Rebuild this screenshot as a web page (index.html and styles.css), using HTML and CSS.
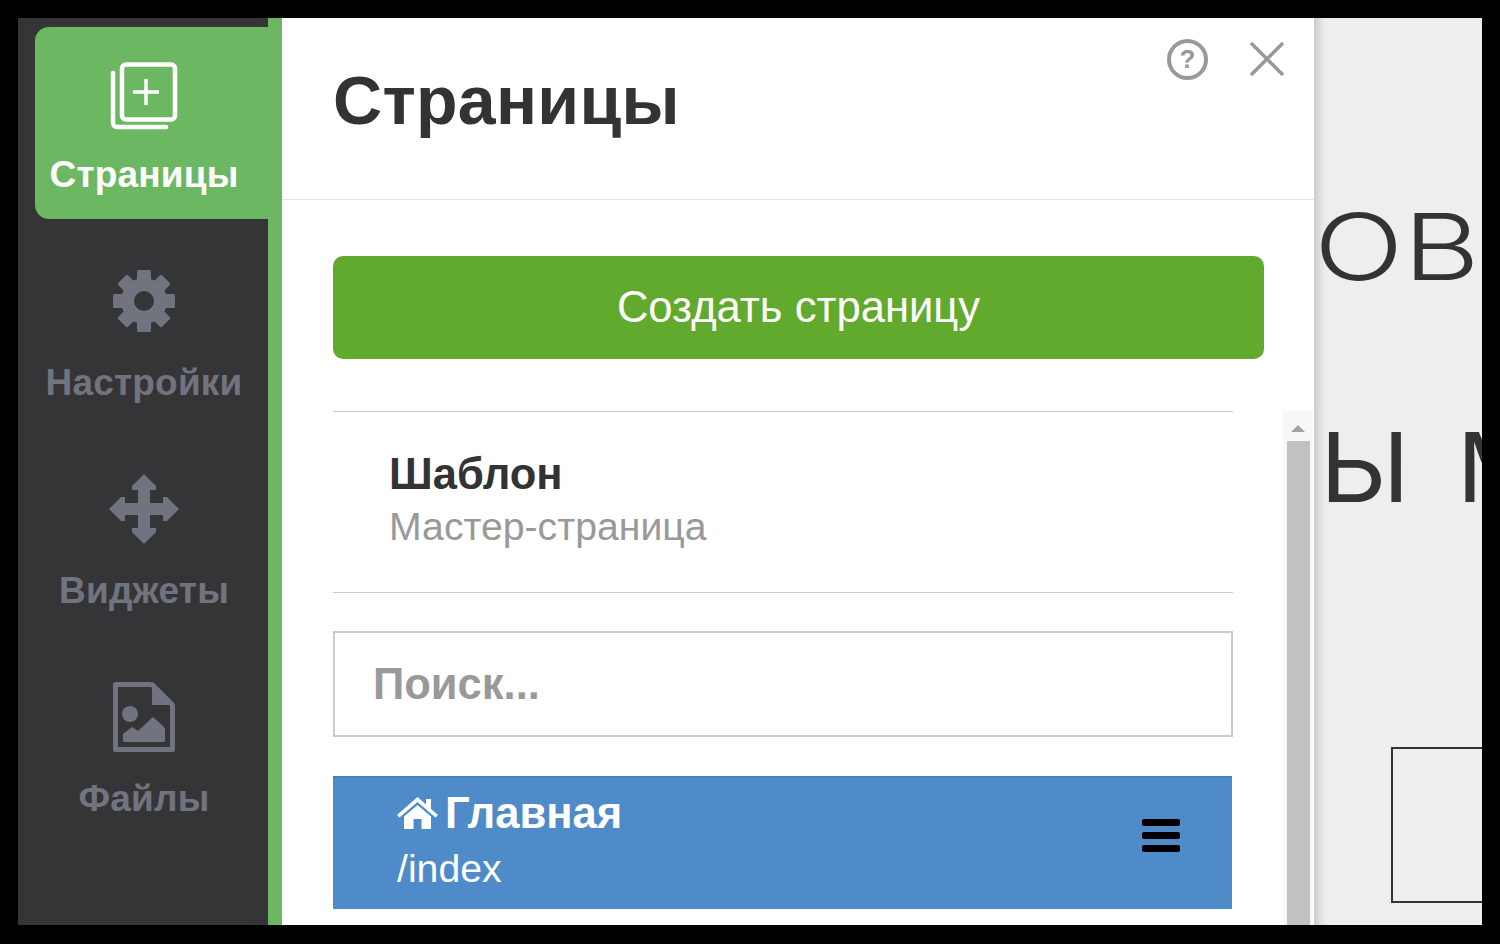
FILE: index.html
```html
<!DOCTYPE html>
<html lang="ru">
  <head>
    <meta charset="UTF-8" />
    <title>Страницы</title>
    <link rel="stylesheet" href="styles.css">
  </head>

  <body>
    <div class="app">
      <!-- Left menu -->
      <nav class="sidebar">
        <a class="menu-item active">
          <div class="menu-icon">
            <svg width="68" height="68" viewBox="0 0 68 68" fill="none" stroke="#fff" stroke-width="4.5">
              <rect x="12" y="2.500" width="53" height="55" rx="4" />
              <path d="M3 11 V61 a4 4 0 0 0 4 4 H56" stroke-linecap="round" />
              <path d="M36 17 V43 M23 30 H49" stroke-width="3.500" />
            </svg>
          </div>
          <span>Страницы</span>
        </a>
        <a class="menu-item">
          <div class="menu-icon">
            <svg width="62" height="62" viewBox="-31 -31 62 62" fill="#71747f">
              <circle r="23" />
              <rect x="-7" y="-31" width="14" height="62" rx="1.500" />
              <rect x="-7" y="-31" width="14" height="62" rx="1.500" transform="rotate(45)" />
              <rect x="-7" y="-31" width="14" height="62" rx="1.500" transform="rotate(90)" />
              <rect x="-7" y="-31" width="14" height="62" rx="1.500" transform="rotate(135)" />
              <circle r="10" fill="#353537" />
            </svg>
          </div>
          <span>Настройки</span>
        </a>
        <a class="menu-item">
          <div class="menu-icon">
            <svg width="70" height="70" viewBox="0 0 70 70" fill="#71747f">
              <path d="M35 0 L47 12 L47 16 L41 16 L41 29 L54 29 L54 23 L58 23 L70 35 L58 47 L54 47 L54 41 L41 41 L41 54 L47 54 L47 58 L35 70 L23 58 L23 54 L29 54 L29 41 L16 41 L16 47 L12 47 L0 35 L12 23 L16 23 L16 29 L29 29 L29 16 L23 16 L23 12 Z" />
            </svg>
          </div>
          <span>Виджеты</span>
        </a>
        <a class="menu-item">
          <div class="menu-icon">
            <svg width="62" height="70" viewBox="0 0 62 70">
              <path d="M2.500 2.500 H39 L59.500 23 V67.500 H2.500 Z" fill="none" stroke="#71747f" stroke-width="5" stroke-linejoin="round" />
              <path d="M39 2 V23 H60 Z" fill="#71747f" />
              <circle cx="17" cy="32" r="8" fill="#71747f" />
              <path d="M10 60 V52 L19 45 L25 49 L40 35 L52 46 V60 Z" fill="#71747f" />
            </svg>
          </div>
          <span>Файлы</span>
        </a>
      </nav>

      <div class="strip"></div>

      <!-- Pages panel -->
      <section class="panel">
        <header class="panel-header">
          <h1>Страницы</h1>
          <div class="panel-tools">
            <span class="help-icon">?</span>
            <svg class="close-icon" width="36" height="34" viewBox="0 0 36 34" stroke="#999" stroke-width="3.500" fill="none">
              <path d="M2 1 L34 33 M34 1 L2 33" />
            </svg>
          </div>
        </header>

        <div class="panel-body">
          <button class="create-button">Создать страницу</button>

          <div class="page-scroll">
            <div class="page-list">
              <div class="template-row">
                <h3>Шаблон</h3>
                <p>Мастер-страница</p>
              </div>
              <div class="search-box">Поиск...</div>
              <div class="page-item">
                <div class="page-info">
                  <div class="page-name">
                    <svg width="41" height="32" viewBox="0 0 41 32" fill="#fff">
                      <path d="M20.500 0 L29 7.500 V2 H34 V12 L41 18 L38.500 20.500 L20.500 5 L2.500 20.500 L0 18 Z" />
                      <path d="M20.500 8 L34 19.500 V32 H24.500 V22 H16.500 V32 H7 V19.500 Z" />
                    </svg>
                    <span>Главная</span>
                  </div>
                  <div class="page-url">/index</div>
                </div>
                <div class="burger"><i></i><i></i><i></i></div>
              </div>
            </div>
            <div class="scrollbar">
              <div class="scroll-up"></div>
              <div class="scroll-thumb"></div>
            </div>
          </div>
        </div>
      </section>

      <!-- Site preview behind the panel -->
      <main class="canvas">
        <div class="canvas-word word-one">ОВ</div>
        <div class="canvas-word word-two">Ы М</div>
        <div class="canvas-box"></div>
      </main>
    </div>
  </body>
</html>
```

FILE: styles.css
```css
/* General Styles */
html,
body {
  height: 944px;
  margin: 0;
  overflow: hidden;
  background-color: #000;
  font-family: "Liberation Sans", Arial, sans-serif;
}

.app {
  display: flex;
  height: 907px;
  margin: 18px 18px 19px;
  overflow: hidden;
}

/* Left menu */
.sidebar {
  width: 233px;
  padding: 9px 0 0 17px;
  display: flex;
  flex-direction: column;
  gap: 16px;
  background-color: #353537;
}

.menu-item {
  height: 192px;
  padding: 30px 15px 0 0;
  box-sizing: border-box;
  display: flex;
  flex-direction: column;
  align-items: center;
  border-radius: 14px 0 0 14px;
  color: #71747f;
  font-size: 37px;
  font-weight: bold;
  letter-spacing: 0.2px;
  white-space: nowrap;
}

.menu-item span {
  margin-top: 26px;
  line-height: 40px;
}

.menu-item.active {
  padding-top: 33px;
  background-color: #6cb862;
  color: #fff;
}

.menu-item.active span {
  margin-top: 23px;
}

.menu-icon {
  height: 72px;
  display: flex;
  align-items: center;
}

.strip {
  width: 14px;
  background-color: #6cb862;
}

/* Pages panel */
.panel {
  width: 1032px;
  display: flex;
  flex-direction: column;
  background-color: #fff;
}

.panel-header {
  height: 181px;
  padding: 0 29px 0 51px;
  display: flex;
  justify-content: space-between;
  border-bottom: 1px solid #e6e6e6;
}

.panel-header h1 {
  margin: 42px 0 0;
  font-size: 68px;
  letter-spacing: 0.3px;
  line-height: 80px;
  color: #333;
}

.panel-tools {
  display: flex;
  gap: 41px;
  padding-top: 21px;
  align-items: flex-start;
}

.help-icon {
  width: 33px;
  height: 33px;
  border: 4px solid #999;
  border-radius: 50%;
  text-align: center;
  font-size: 26px;
  font-weight: bold;
  line-height: 33px;
  color: #999;
}

.close-icon {
  margin-top: 3px;
}

.panel-body {
  flex: 1;
  min-height: 0;
  padding: 56px 1px 0 51px;
  display: flex;
  flex-direction: column;
}

.create-button {
  width: 931px;
  height: 103px;
  border: none;
  border-radius: 10px;
  background-color: #62aa2e;
  color: #fff;
  font-family: inherit;
  font-size: 43.600px;
}

.page-scroll {
  flex: 1;
  min-height: 0;
  margin-top: 52px;
  display: flex;
  justify-content: space-between;
  overflow: hidden;
}

.page-list {
  width: 900px;
}

.template-row {
  height: 182px;
  box-sizing: border-box;
  padding: 37px 0 0 56px;
  border-top: 1px solid #ccc;
  border-bottom: 1px solid #ccc;
}

.template-row h3 {
  margin: 0;
  font-size: 43.500px;
  line-height: 50px;
  color: #333;
}

.template-row p {
  margin: 3px 0 0;
  font-size: 39.200px;
  line-height: 50px;
  color: #999;
}

.search-box {
  height: 106px;
  box-sizing: border-box;
  margin-top: 38px;
  padding-left: 38px;
  border: 2px solid #ccc;
  font-size: 43.500px;
  font-weight: bold;
  line-height: 102px;
  color: #999;
}

.page-item {
  width: 899px;
  height: 133px;
  box-sizing: border-box;
  margin-top: 39px;
  padding: 4px 52px 0 64px;
  display: flex;
  justify-content: space-between;
  align-items: flex-start;
  background-color: #4f8bc9;
  border-top: 2px solid #447fbd;
  color: #fff;
}

.page-name {
  display: flex;
  align-items: center;
  gap: 7px;
  font-size: 43.600px;
  font-weight: bold;
  line-height: 62px;
}

.page-url {
  font-size: 39.200px;
  line-height: 50px;
}

.burger {
  width: 38px;
  margin-top: 37px;
  display: flex;
  flex-direction: column;
  gap: 6px;
}

.burger i {
  height: 7px;
  border-radius: 2px;
  background-color: #000;
}

.scrollbar {
  width: 30px;
  display: flex;
  flex-direction: column;
  align-items: center;
  background-color: #f7f7f7;
}

.scroll-up {
  margin: 14px 0 9px;
  border-left: 7px solid transparent;
  border-right: 7px solid transparent;
  border-bottom: 7px solid #a3a3a3;
}

.scroll-thumb {
  width: 23px;
  flex: 1;
  background-color: #c1c1c1;
}

/* Site preview */
.canvas {
  flex: 1;
  position: relative;
  overflow: hidden;
  background-color: #eeeeee;
  box-shadow: inset 12px 0 10px -8px rgba(0, 0, 0, 0.18);
}

.canvas-word {
  position: absolute;
  white-space: nowrap;
  font-family: Inter, sans-serif;
  line-height: 100px;
  color: #333;
  transform-origin: left top;
}

.word-one {
  left: 0;
  top: 179px;
  font-size: 92px;
  font-weight: 300;
  transform: scaleX(1.28);
}

.word-two {
  left: 6px;
  top: 399px;
  font-size: 96px;
  font-weight: 400;
  word-spacing: 17px;
  transform: scaleX(1.06);
}

.canvas-box {
  position: absolute;
  left: 77px;
  top: 729px;
  width: 120px;
  height: 152px;
  border: 2px solid #333;
}
```
